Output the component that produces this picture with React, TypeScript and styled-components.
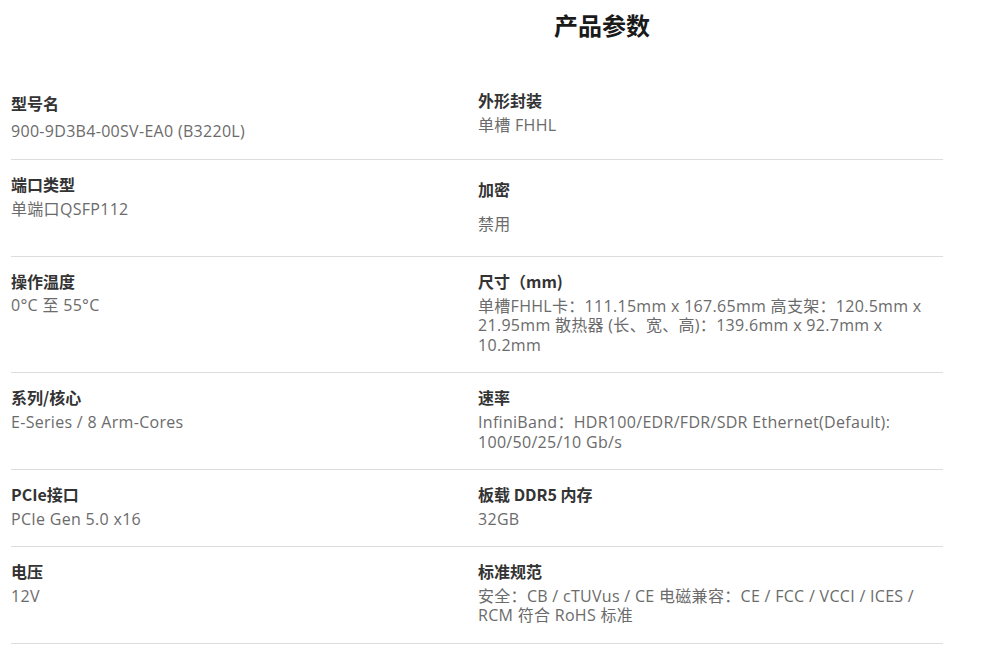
import React from "react";
import styled, { createGlobalStyle } from "styled-components";

const GlobalStyle = createGlobalStyle`
  html, body {
    margin: 0;
    padding: 0;
    background: #ffffff;
    overflow: hidden;
  }
  body {
    font-family: "Noto Sans CJK SC", "Noto Sans", sans-serif;
  }
`;

const Page = styled.div`
  width: 989px;
  min-height: 647px;
  box-sizing: border-box;
`;

const Title = styled.h2`
  margin: 7px 0 0;
  padding-left: 215px;
  text-align: center;
  font-size: 24px;
  line-height: 36px;
  font-weight: 700;
  color: #1a1a1a;
`;

const Grid = styled.div`
  margin: 36px 0 0 11px;
  width: 932px;
  display: grid;
  grid-template-columns: 467px 465px;
`;

const Cell = styled.div<{ $top: number; $bottom: number }>`
  padding: ${(p) => p.$top}px 0 ${(p) => p.$bottom}px;
  border-bottom: 1px solid #dddddd;
`;

const Label = styled.div`
  font-size: 16px;
  line-height: 22px;
  font-weight: 700;
  color: #333333;
`;

const Value = styled.div<{ $gap: number }>`
  margin-top: ${(p) => p.$gap}px;
  font-family: "Open Sans", "Noto Sans CJK SC", sans-serif;
  font-size: 16px;
  letter-spacing: 0.3px;
  line-height: 19.5px;
  color: #6b6b6b;
  padding-right: 18px;
`;

type Spec = {
  label: string;
  value: string;
  top?: number;
  gap?: number;
  bottom?: number;
};

const specs: Spec[] = [
  { label: "型号名", value: "900-9D3B4-00SV-EA0 (B3220L)", top: 13, gap: 8, bottom: 17.2 },
  { label: "外形封装", value: "单槽 FHHL", top: 10, gap: 5 },
  { label: "端口类型", value: "单端口QSFP112" },
  { label: "加密", value: "禁用", top: 18, gap: 15, bottom: 21.7 },
  { label: "操作温度", value: "0°C 至 55°C", gap: 4 },
  {
    label: "尺寸（mm)",
    value:
      "单槽FHHL卡：111.15mm x 167.65mm 高支架：120.5mm x 21.95mm 散热器 (长、宽、高)：139.6mm x 92.7mm x 10.2mm",
  },
  { label: "系列/核心", value: "E-Series / 8 Arm-Cores" },
  {
    label: "速率",
    value:
      "InfiniBand：HDR100/EDR/FDR/SDR Ethernet(Default): 100/50/25/10 Gb/s",
  },
  { label: "PCIe接口", value: "PCIe Gen 5.0 x16" },
  { label: "板载 DDR5 内存", value: "32GB" },
  { label: "电压", value: "12V" },
  {
    label: "标准规范",
    value:
      "安全：CB / cTUVus / CE 电磁兼容：CE / FCC / VCCI / ICES / RCM 符合 RoHS 标准",
  },
];

export default function App() {
  return (
    <>
      <GlobalStyle />
      <Page>
        <Title>产品参数</Title>
        <Grid>
          {specs.map((s) => (
            <Cell key={s.label} $top={s.top ?? 13} $bottom={s.bottom ?? 16.7}>
              <Label>{s.label}</Label>
              <Value $gap={s.gap ?? 5}>{s.value}</Value>
            </Cell>
          ))}
        </Grid>
      </Page>
    </>
  );
}
